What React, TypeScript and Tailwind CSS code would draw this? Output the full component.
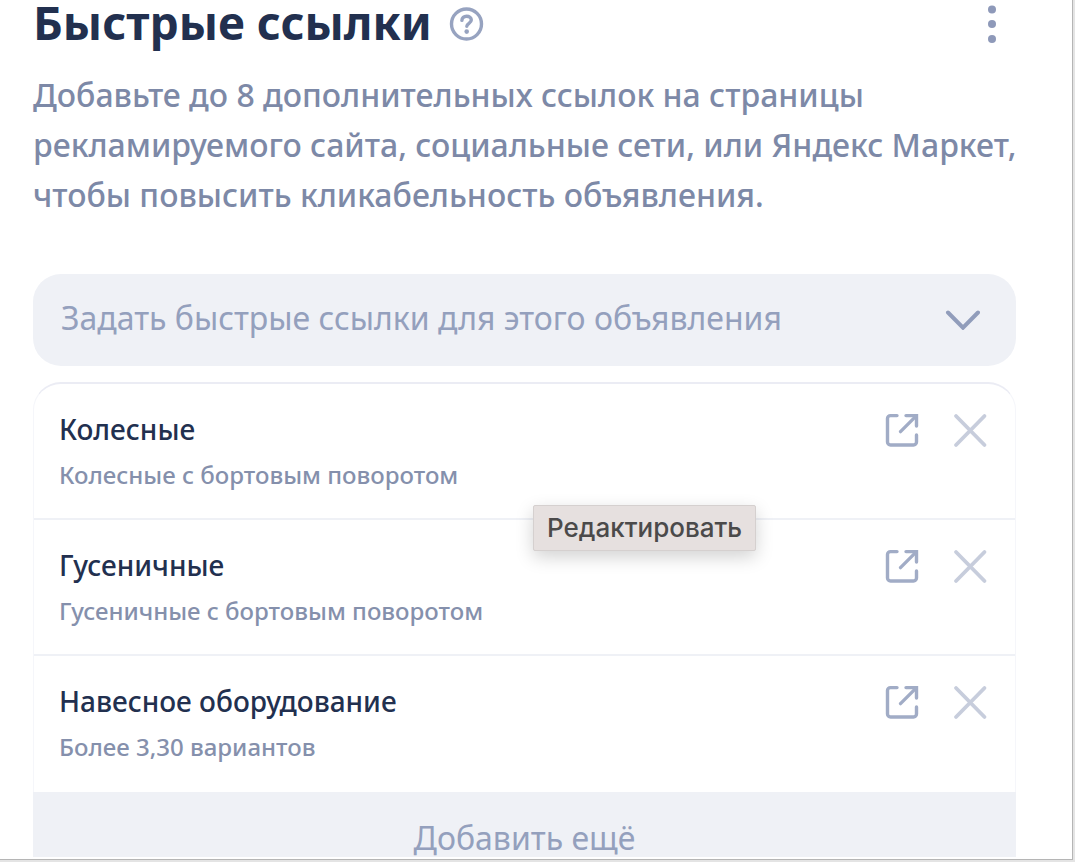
import type { ReactNode } from 'react';

const links = [
  { title: 'Колесные', description: 'Колесные с бортовым поворотом' },
  { title: 'Гусеничные', description: 'Гусеничные с бортовым поворотом' },
  { title: 'Навесное оборудование', description: 'Более 3,30 вариантов' },
];

const IconButton = ({ label, children }: { label: string; children: ReactNode }) => (
  <button type="button" aria-label={label} className="shrink-0 cursor-pointer">
    {children}
  </button>
);

const HelpIcon = () => (
  <svg className="size-9" viewBox="0 0 36 36" fill="none" stroke="#97a3c0" strokeWidth="3.4" strokeLinecap="round">
    <circle cx="18.5" cy="18" r="15" />
    <path d="M13.9 14.4c0-2.6 2-4.2 4.7-4.2s4.7 1.6 4.7 3.9c0 3.2-4.5 3.2-4.5 6.2" />
    <circle cx="18.7" cy="25.6" r="2.3" fill="#97a3c0" stroke="none" />
  </svg>
);

const DotsIcon = () => (
  <svg className="h-10 w-9" viewBox="0 0 36 40" fill="#8e99b9">
    <circle cx="18" cy="5.5" r="4" />
    <circle cx="18" cy="20" r="4" />
    <circle cx="18" cy="35" r="4" />
  </svg>
);

const ChevronIcon = () => (
  <svg
    className="pointer-events-none col-start-1 row-start-1 mr-9 h-5 w-9 self-center justify-self-end"
    viewBox="0 0 36 20"
    fill="none"
    stroke="#919dbb"
    strokeWidth="4"
    strokeLinecap="round"
  >
    <path d="M4 2.5l15 15.2L34 2.5" />
  </svg>
);

const OpenIcon = () => (
  <svg className="size-9" viewBox="0 0 36 36" fill="none" stroke="#a1acc6" strokeWidth="3.4" strokeLinecap="round">
    <path d="M13 3.6H6.5a3 3 0 0 0-3 3V30a3 3 0 0 0 3 3h23a3 3 0 0 0 3-3v-7" />
    <path d="M22 3.6h10.5v10.5" />
    <path d="M31.5 4.6L16.5 19.6" />
  </svg>
);

const CloseIcon = () => (
  <svg className="size-9" viewBox="0 0 36 36" fill="none" stroke="#c7cddc" strokeWidth="3.8" strokeLinecap="round">
    <path d="M4 4l28.5 29M32.5 4L4 33" />
  </svg>
);

const App = () => {
  return (
    <div className="bg-[#e4e4e4] pr-0.5 pb-0.5 font-['Noto_Sans',sans-serif]">
      <main className="border-r border-b border-[#b5b5b5] bg-white pr-14 pb-0.5 pl-[33px]">
        <header className="flex h-12 items-center gap-4">
          <h1 className="pb-1 text-[46px] leading-[44px] font-bold text-[#22304f]">Быстрые ссылки</h1>
          <IconButton label="Справка">
            <HelpIcon />
          </IconButton>
          <div className="ml-auto flex pr-1.5">
            <IconButton label="Ещё">
              <DotsIcon />
            </IconButton>
          </div>
        </header>

        <p className="mt-[22px] -mr-2 text-[32px] leading-[50px] font-medium text-[#7d89a7]">
          Добавьте до 8 дополнительных ссылок на страницы рекламируемого сайта, социальные сети, или Яндекс Маркет,
          чтобы повысить кликабельность объявления.
        </p>

        <div className="mt-[54px] grid">
          <select
            aria-label="Быстрые ссылки"
            className="col-start-1 row-start-1 h-[92px] w-full appearance-none rounded-[28px] bg-[#eff1f6] px-7 pb-1 text-[32px] text-[#94a0bd]"
          >
            <option>Задать быстрые ссылки для этого объявления</option>
          </select>
          <ChevronIcon />
        </div>

        <section className="mt-4 h-[475px] overflow-hidden">
          <ul className="rounded-t-[28px] border-x border-t-2 border-x-[#f5f6fa] border-t-[#ebecf4]">
            {links.map((link, index) => (
              <li
                key={link.title}
                className="relative flex h-[136px] items-start justify-between border-b-2 border-[#eff1f6] pt-6 pr-[27px] pl-[25px] last:border-b-0"
              >
                <div>
                  <h2 className="text-[28px] leading-[42px] font-medium text-[#22304f]">{link.title}</h2>
                  <p className="text-[24px] leading-[50px] font-medium text-[#8590ac]">{link.description}</p>
                </div>
                <div className="flex gap-8 pt-1">
                  <IconButton label="Открыть">
                    <OpenIcon />
                  </IconButton>
                  <IconButton label="Удалить">
                    <CloseIcon />
                  </IconButton>
                </div>
                {index === 0 && (
                  <span
                    role="tooltip"
                    className="absolute top-[121px] left-[499px] z-10 rounded-xs border border-[#d5d0cf] bg-[#e6e0df] px-[13px] font-[Inter] text-[26px] leading-[44px] font-medium text-[#4b4a4a] shadow-[0_6px_18px_rgba(0,0,0,0.18)]"
                  >
                    Редактировать
                  </span>
                )}
              </li>
            ))}
          </ul>
          <button
            type="button"
            className="h-[92px] w-full cursor-pointer bg-[#eff1f6] text-[32px] text-[#94a0bd]"
          >
            Добавить ещё
          </button>
        </section>
      </main>
    </div>
  );
};

export default App;
